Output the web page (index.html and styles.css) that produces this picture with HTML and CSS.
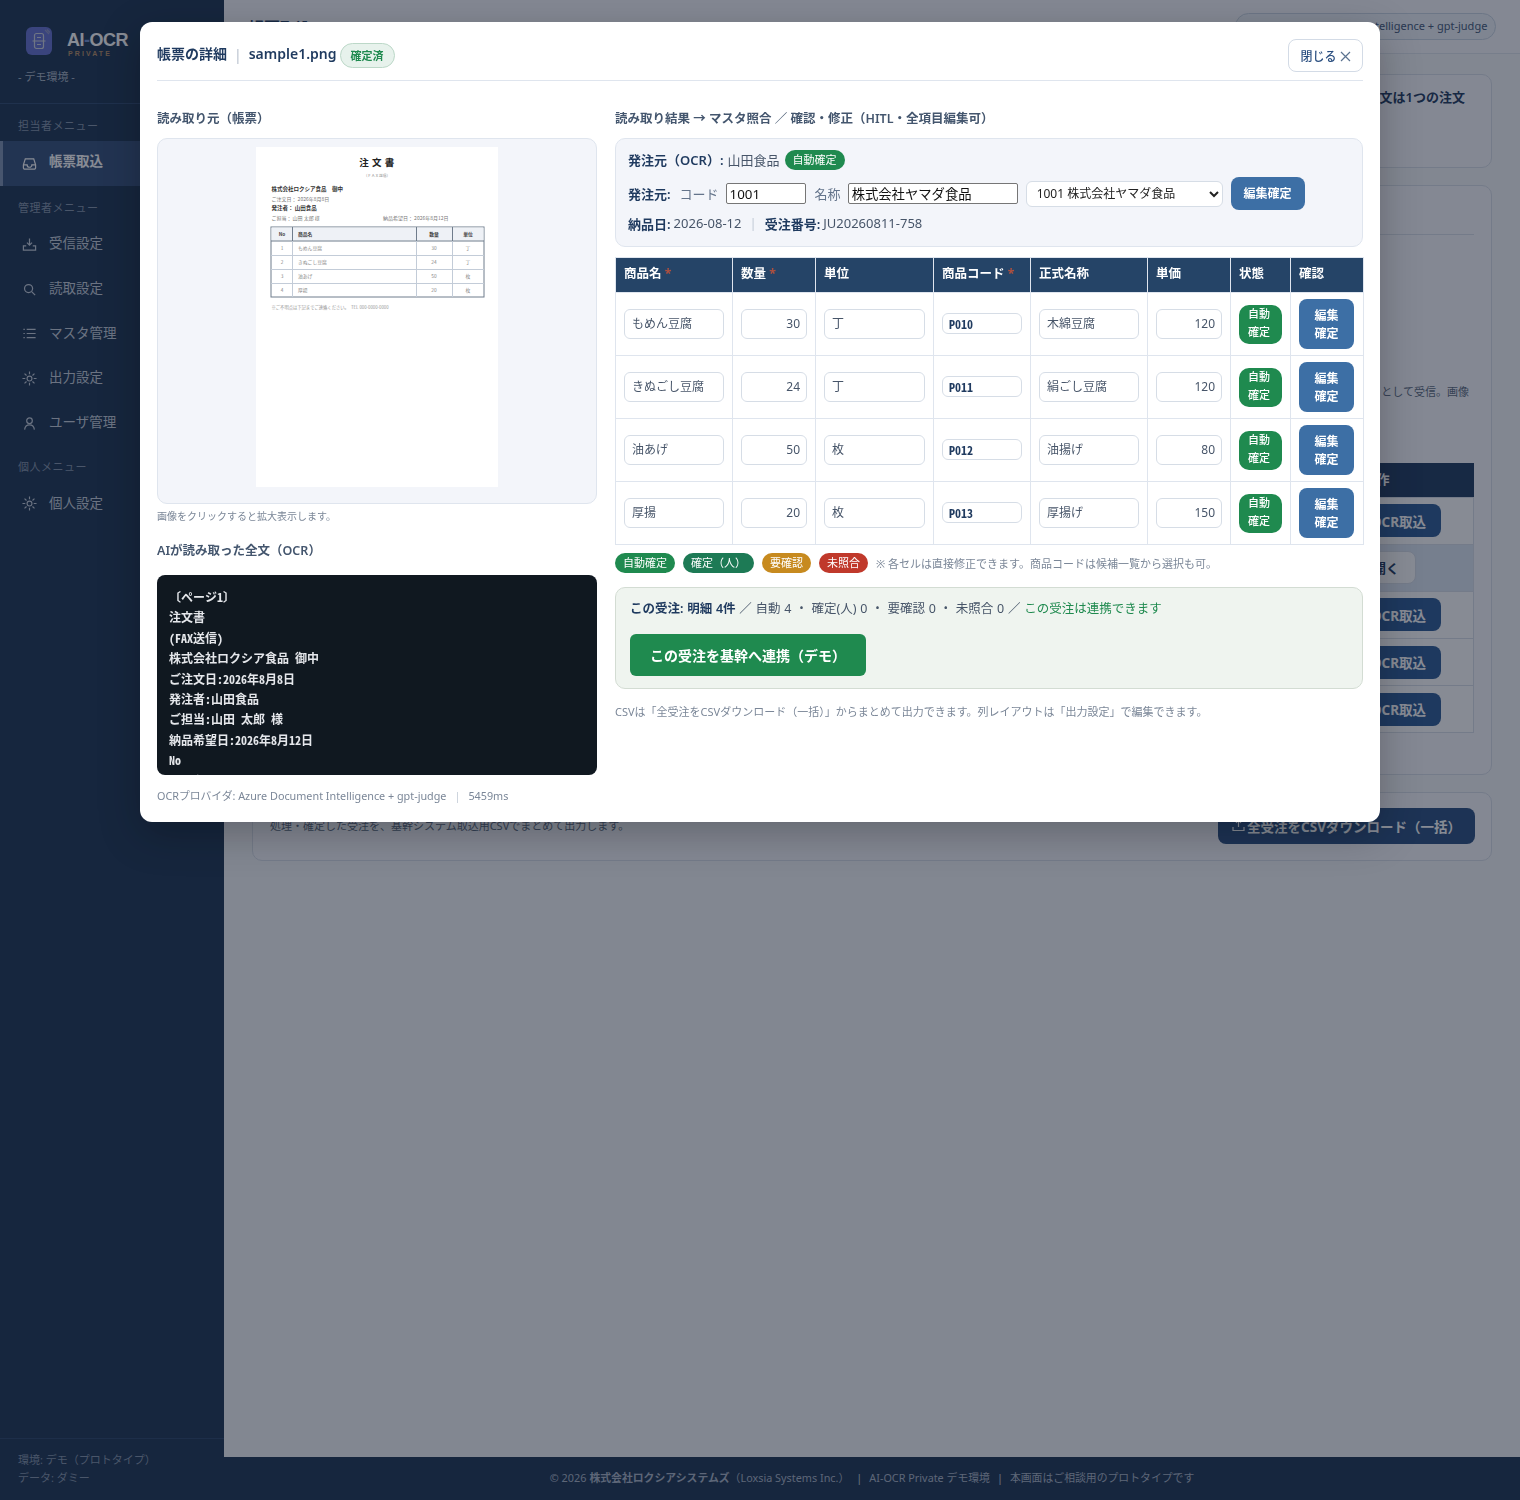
FILE: index.html
```html
<!DOCTYPE html>
<html lang="ja">
<head>
    <meta charset="UTF-8">
    <title>AI-OCR Private</title>
    <link rel="stylesheet" href="styles.css">
</head>
<body>
    <div class="app">
        <aside class="sidebar">
            <div class="brand">
                <div class="brand-row">
                    <div class="brand-icon">
                        <svg width="26" height="28" viewBox="0 0 26 28" fill="none" stroke="#cfd2de" stroke-width="1.2"><rect x="8.500" y="6.500" width="9" height="15" rx="2"/><path d="M6.500 14h13M11 10.500h4M11 17.500h4"/><path d="M19 3l4 4M21 2.500l3 3" stroke="#8f95c4"/></svg>
                    </div>
                    <div class="brand-name">
                        <div class="brand-title">AI<span class="dash">-</span>OCR</div>
                        <div class="brand-sub">PRIVATE</div>
                    </div>
                </div>
                <div class="brand-env">- デモ環境 -</div>
            </div>
            <div class="menu-label first">担当者メニュー</div>
            <a class="menu-item active">
                <svg class="menu-icon" viewBox="0 0 16 16" fill="none" stroke="currentColor" stroke-width="1.300"><path d="M1.500 9.500 3.500 3h9l2 6.500v3a1.500 1.500 0 0 1-1.500 1.500H3a1.500 1.500 0 0 1-1.500-1.500z"/><path d="M1.500 9.500H5.500a2.500 2.500 0 0 0 5 0h4"/></svg>
                <span>帳票取込</span>
            </a>
            <div class="menu-label">管理者メニュー</div>
            <a class="menu-item">
                <svg class="menu-icon" viewBox="0 0 16 16" fill="none" stroke="currentColor" stroke-width="1.300"><path d="M8 1.500v7M5.300 6 8 8.700 10.700 6"/><path d="M4.500 9.500H1.500v4.500h13V9.500h-3"/></svg>
                <span>受信設定</span>
            </a>
            <a class="menu-item">
                <svg class="menu-icon" viewBox="0 0 16 16" fill="none" stroke="currentColor" stroke-width="1.300"><circle cx="7" cy="7" r="4.300"/><path d="m10.300 10.300 3.700 3.700"/></svg>
                <span>読取設定</span>
            </a>
            <a class="menu-item">
                <svg class="menu-icon" viewBox="0 0 16 16" fill="none" stroke="currentColor" stroke-width="1.300"><path d="M5 3.500h9.500M5 8h9.500M5 12.500h9.500M1.500 3.500h1.500M1.500 8h1.500M1.500 12.500h1.500"/></svg>
                <span>マスタ管理</span>
            </a>
            <a class="menu-item">
                <svg class="menu-icon" viewBox="0 0 16 16" fill="none" stroke="currentColor" stroke-width="1.200"><circle cx="8" cy="8" r="2.600"/><path d="M8 .5v3M8 12.500v3M.5 8h3M12.500 8h3M2.700 2.700l2.100 2.100M11.200 11.200l2.100 2.100M13.300 2.700l-2.100 2.100M4.800 11.200l-2.100 2.100"/></svg>
                <span>出力設定</span>
            </a>
            <a class="menu-item">
                <svg class="menu-icon" viewBox="0 0 16 16" fill="none" stroke="currentColor" stroke-width="1.300"><circle cx="8" cy="5" r="3"/><path d="M2.800 14.500c.4-3.400 2.400-5 5.200-5s4.800 1.600 5.200 5"/></svg>
                <span>ユーザ管理</span>
            </a>
            <div class="menu-label">個人メニュー</div>
            <a class="menu-item">
                <svg class="menu-icon" viewBox="0 0 16 16" fill="none" stroke="currentColor" stroke-width="1.200"><circle cx="8" cy="8" r="2.600"/><path d="M8 .5v3M8 12.500v3M.5 8h3M12.500 8h3M2.700 2.700l2.100 2.100M11.200 11.200l2.100 2.100M13.300 2.700l-2.100 2.100M4.800 11.200l-2.100 2.100"/></svg>
                <span>個人設定</span>
            </a>
            <div class="sidebar-foot">
                <div>環境: デモ（プロトタイプ）</div>
                <div>データ: ダミー</div>
            </div>
        </aside>

        <div class="main">
            <header class="topbar">
                <h1>帳票取込</h1>
                <div class="engine-pill">OCR: Azure Document Intelligence + gpt-judge</div>
            </header>
            <div class="content">
                <section class="card card-intro">
                    <p>1通の注文は1つの注文</p>
                </section>
                <section class="card card-list">
                    <div class="card-title">受信一覧</div>
                    <p class="card-lead">として受信。画像</p>
                    <table class="bg-table">
                        <thead><tr><th></th><th>操作</th></tr></thead>
                        <tbody>
                            <tr><td></td><td><button class="btn-ocr">OCR取込</button></td></tr>
                            <tr class="row-open"><td></td><td><button class="btn-open">開く</button></td></tr>
                            <tr><td></td><td><button class="btn-ocr">OCR取込</button></td></tr>
                            <tr><td></td><td><button class="btn-ocr">OCR取込</button></td></tr>
                            <tr><td></td><td><button class="btn-ocr">OCR取込</button></td></tr>
                        </tbody>
                    </table>
                </section>
                <section class="card card-export">
                    <p>処理・確定した受注を、基幹システム取込用CSVでまとめて出力します。</p>
                    <button class="btn-export">
                        <svg width="13" height="13" viewBox="0 0 13 13" fill="none" stroke="currentColor" stroke-width="1.200"><path d="M6.500 8V1.500M4 3.800 6.500 1.300 9 3.800M1 8v3.500h11V8"/></svg>
                        全受注をCSVダウンロード（一括）
                    </button>
                </section>
            </div>
            <footer class="footer">
                © 2026 <b>株式会社ロクシアシステムズ</b>（Loxsia Systems Inc.）<span class="sep">|</span>AI-OCR Private デモ環境<span class="sep">|</span>本画面はご相談用のプロトタイプです
            </footer>
        </div>
    </div>

    <div class="overlay">
        <div class="modal">
            <div class="modal-head">
                <div class="modal-title">
                    <span class="title-text">帳票の詳細</span><span class="title-sep">|</span><span class="title-text">sample1.png</span>
                    <span class="status-pill">確定済</span>
                </div>
                <button class="btn-close">閉じる
                    <svg width="11" height="11" viewBox="0 0 11 11" fill="none" stroke="#5b7390" stroke-width="1.200"><path d="m1 1 9 9M10 1l-9 9"/></svg>
                </button>
            </div>

            <div class="modal-body">
                <div class="col-left">
                    <h3 class="section-title">読み取り元（帳票）</h3>
                    <div class="preview">
                        <svg class="sheet" width="242" height="340" viewBox="0 0 242 340">
                            <rect width="242" height="340" fill="#fff"/>
                            <text x="121" y="19" class="s-title" text-anchor="middle">注 文 書</text>
                            <text x="121" y="30" class="s-small" text-anchor="middle">（ＦＡＸ送信）</text>
                            <text x="15.500" y="44" class="s-bold">株式会社ロクシア食品　御中</text>
                            <text x="15.500" y="54" class="s-gray">ご注文日： 2026年8月8日</text>
                            <text x="15.500" y="63" class="s-bold">発注者： 山田食品</text>
                            <text x="15.500" y="72.500" class="s-gray">ご担当： 山田 太郎 様</text>
                            <text x="127" y="72.500" class="s-gray">納品希望日： 2026年8月12日</text>
                            <rect x="15" y="80" width="213" height="70" fill="#fff" stroke="#6f7c8c" stroke-width="1"/>
                            <rect x="15.500" y="80.500" width="212" height="13" fill="#eef1f6"/>
                            <path d="M15 94h213" stroke="#6f7c8c"/>
                            <path d="M15 108.500h213M15 122.500h213M15 136.500h213M36.500 94v56M160.500 94v56M196.500 94v56" stroke="#c3ccd8"/>
                            <path d="M36.500 80v14M160.500 80v14M196.500 80v14" stroke="#6f7c8c"/>
                            <text x="26" y="89" class="s-th" text-anchor="middle">No</text>
                            <text x="42" y="89" class="s-th">商品名</text>
                            <text x="178" y="89" class="s-th" text-anchor="middle">数量</text>
                            <text x="212" y="89" class="s-th" text-anchor="middle">単位</text>
                            <text x="26" y="103" class="s-td" text-anchor="middle">1</text>
                            <text x="42" y="103" class="s-td">もめん豆腐</text>
                            <text x="178" y="103" class="s-td" text-anchor="middle">30</text>
                            <text x="212" y="103" class="s-td" text-anchor="middle">丁</text>
                            <text x="26" y="117" class="s-td" text-anchor="middle">2</text>
                            <text x="42" y="117" class="s-td">きぬごし豆腐</text>
                            <text x="178" y="117" class="s-td" text-anchor="middle">24</text>
                            <text x="212" y="117" class="s-td" text-anchor="middle">丁</text>
                            <text x="26" y="131" class="s-td" text-anchor="middle">3</text>
                            <text x="42" y="131" class="s-td">油あげ</text>
                            <text x="178" y="131" class="s-td" text-anchor="middle">50</text>
                            <text x="212" y="131" class="s-td" text-anchor="middle">枚</text>
                            <text x="26" y="145" class="s-td" text-anchor="middle">4</text>
                            <text x="42" y="145" class="s-td">厚揚</text>
                            <text x="178" y="145" class="s-td" text-anchor="middle">20</text>
                            <text x="212" y="145" class="s-td" text-anchor="middle">枚</text>
                            <text x="15.500" y="161.500" class="s-foot">※ご不明点は下記までご連絡ください。　TEL 000-0000-0000</text>
                        </svg>
                    </div>
                    <p class="hint">画像をクリックすると拡大表示します。</p>
                    <h3 class="section-title ocr-title">AIが読み取った全文（OCR）</h3>
                    <pre class="ocr-text">〔ページ1〕
注文書
(FAX送信)
株式会社ロクシア食品 御中
ご注文日:2026年8月8日
発注者:山田食品
ご担当:山田 太郎 様
納品希望日:2026年8月12日
No
商品名</pre>
                    <p class="provider">OCRプロバイダ: Azure Document Intelligence + gpt-judge<span class="sep">|</span>5459ms</p>
                </div>

                <div class="col-right">
                    <h3 class="section-title">読み取り結果 → マスタ照合 ／ 確認・修正（HITL・全項目編集可）</h3>
                    <div class="order-panel">
                        <div class="order-line">
                            <b>発注元（OCR）:</b> 山田食品 <span class="badge green">自動確定</span>
                        </div>
                        <div class="order-form">
                            <b>発注元:</b>
                            <span class="field-label">コード</span>
                            <input class="plain-input code" value="1001">
                            <span class="field-label">名称</span>
                            <input class="plain-input name" value="株式会社ヤマダ食品">
                            <select class="order-select"><option>1001 株式会社ヤマダ食品</option></select>
                            <button class="btn-edit wide">編集確定</button>
                        </div>
                        <div class="order-line meta">
                            <b>納品日:</b> 2026-08-12<span class="sep">|</span><b>受注番号:</b> JU20260811-758
                        </div>
                    </div>

                    <table class="items">
                        <thead>
                            <tr>
                                <th>商品名 <i>*</i></th>
                                <th>数量 <i>*</i></th>
                                <th>単位</th>
                                <th>商品コード <i>*</i></th>
                                <th>正式名称</th>
                                <th>単価</th>
                                <th>状態</th>
                                <th>確認</th>
                            </tr>
                        </thead>
                        <tbody>
                            <tr>
                                <td><input class="cell-input" value="もめん豆腐"></td>
                                <td><input class="cell-input num" value="30"></td>
                                <td><input class="cell-input" value="丁"></td>
                                <td><input class="cell-input sku" value="P010"></td>
                                <td><input class="cell-input" value="木綿豆腐"></td>
                                <td><input class="cell-input num" value="120"></td>
                                <td><span class="state">自動<br>確定</span></td>
                                <td><button class="btn-edit">編集<br>確定</button></td>
                            </tr>
                            <tr>
                                <td><input class="cell-input" value="きぬごし豆腐"></td>
                                <td><input class="cell-input num" value="24"></td>
                                <td><input class="cell-input" value="丁"></td>
                                <td><input class="cell-input sku" value="P011"></td>
                                <td><input class="cell-input" value="絹ごし豆腐"></td>
                                <td><input class="cell-input num" value="120"></td>
                                <td><span class="state">自動<br>確定</span></td>
                                <td><button class="btn-edit">編集<br>確定</button></td>
                            </tr>
                            <tr>
                                <td><input class="cell-input" value="油あげ"></td>
                                <td><input class="cell-input num" value="50"></td>
                                <td><input class="cell-input" value="枚"></td>
                                <td><input class="cell-input sku" value="P012"></td>
                                <td><input class="cell-input" value="油揚げ"></td>
                                <td><input class="cell-input num" value="80"></td>
                                <td><span class="state">自動<br>確定</span></td>
                                <td><button class="btn-edit">編集<br>確定</button></td>
                            </tr>
                            <tr>
                                <td><input class="cell-input" value="厚揚"></td>
                                <td><input class="cell-input num" value="20"></td>
                                <td><input class="cell-input" value="枚"></td>
                                <td><input class="cell-input sku" value="P013"></td>
                                <td><input class="cell-input" value="厚揚げ"></td>
                                <td><input class="cell-input num" value="150"></td>
                                <td><span class="state">自動<br>確定</span></td>
                                <td><button class="btn-edit">編集<br>確定</button></td>
                            </tr>
                        </tbody>
                    </table>

                    <div class="legend">
                        <span class="badge green">自動確定</span>
                        <span class="badge teal">確定（人）</span>
                        <span class="badge amber">要確認</span>
                        <span class="badge red">未照合</span>
                        <span class="legend-note">※ 各セルは直接修正できます。商品コードは候補一覧から選択も可。</span>
                    </div>

                    <div class="sync-panel">
                        <div class="sync-line">
                            <b>この受注: 明細 4件</b> ／ 自動 4 ・ 確定(人) 0 ・ 要確認 0 ・ 未照合 0 ／ <span class="ok">この受注は連携できます</span>
                        </div>
                        <button class="btn-sync">この受注を基幹へ連携（デモ）</button>
                    </div>
                    <p class="csv-note">CSVは「全受注をCSVダウンロード（一括）」からまとめて出力できます。列レイアウトは「出力設定」で編集できます。</p>
                </div>
            </div>
        </div>
    </div>
</body>
</html>
```

FILE: styles.css
```css
* {
    box-sizing: border-box;
}

body {
    margin: 0;
    font-family: "Noto Sans", "Noto Sans CJK JP", sans-serif;
    color: #1f3a5f;
    background-color: #f5f6f9;
}

.app {
    display: flex;
    min-height: 1500px;
}

/* sidebar */
.sidebar {
    width: 224px;
    flex-shrink: 0;
    display: flex;
    flex-direction: column;
    background-color: #1d3552;
    color: #d5dbe5;
}

.brand {
    height: 104px;
    padding: 27px 18px 0 26px;
    border-bottom: 1px solid #2f4a70;
}

.brand-row {
    display: flex;
    align-items: flex-start;
    gap: 15px;
}

.brand-icon {
    width: 26px;
    height: 28px;
    border-radius: 6px;
    background-color: #6470d0;
}

.brand-icon svg {
    display: block;
}

.brand-name {
    padding-top: 4px;
}

.brand-title {
    font-family: "Liberation Sans", sans-serif;
    font-size: 18px;
    font-weight: 700;
    line-height: 18px;
    letter-spacing: -0.5px;
    color: #fff;
}

.brand-title .dash {
    color: #6f8fd0;
}

.brand-sub {
    padding-left: 1px;
    font-family: "Liberation Sans", sans-serif;
    font-size: 7px;
    font-weight: 700;
    line-height: 9px;
    letter-spacing: 2.1px;
    color: #b88f66;
}

.brand-env {
    margin: 11px 0 0 -8px;
    font-size: 11px;
    line-height: 16px;
    color: #a9b4c4;
}

.menu-label {
    height: 20px;
    margin-top: 12px;
    margin-bottom: 4px;
    padding-left: 18px;
    font-size: 11px;
    line-height: 20px;
    letter-spacing: 0.5px;
    color: #8494aa;
}

.menu-label.first {
    margin-bottom: 5px;
}

.menu-item {
    display: flex;
    align-items: center;
    gap: 12px;
    height: 44.700px;
    padding-left: 22px;
    font-size: 13.500px;
    line-height: 20px;
    color: #c6cedb;
}

.menu-item span {
    position: relative;
    top: -1px;
}

.menu-item.active {
    height: 45px;
    font-weight: 700;
    color: #fff;
    background-color: #35507a;
    border-left: 3px solid #7f93b3;
    padding-left: 19px;
}

.menu-item.active span {
    top: -3px;
}

.menu-icon {
    width: 15px;
    height: 15px;
    flex-shrink: 0;
}

.sidebar-foot {
    margin-top: auto;
    height: 62px;
    padding: 12px 18px 0;
    border-top: 1px solid #2a4569;
    font-size: 11px;
    line-height: 18px;
    color: #8494aa;
}

/* page behind the dialog */
.main {
    flex: 1;
    min-width: 0;
    display: flex;
    flex-direction: column;
}

.topbar {
    height: 54px;
    display: flex;
    align-items: center;
    justify-content: space-between;
    padding: 0 24px;
    border-bottom: 1px solid #dfe4ec;
    background-color: #f8f9fc;
}

.topbar h1 {
    margin: 0;
    font-size: 16px;
    color: #1f3a5f;
}

.engine-pill {
    width: 261px;
    height: 27px;
    margin-top: -1px;
    padding: 0 11px;
    border: 1px solid #c9d4e2;
    border-radius: 14px;
    background-color: #eef2f8;
    font-size: 11px;
    line-height: 24px;
    text-align: right;
    white-space: nowrap;
    overflow: hidden;
    color: #44597a;
}

.content {
    flex: 1;
    padding: 20px 28px 0;
}

.card {
    border: 1px solid #d9dfe8;
    border-radius: 10px;
    background-color: #f8f9fc;
    margin-bottom: 17px;
}

.card-intro {
    height: 94px;
    padding: 12px 26px;
    text-align: right;
    font-size: 13px;
    font-weight: 600;
}

.card-intro p {
    margin: 0;
}

.card-list {
    height: 590px;
    padding: 0 17px;
}

.card-title {
    height: 49px;
    padding-top: 15px;
    font-size: 14px;
    font-weight: 600;
    border-bottom: 1px solid #d9dfe8;
}

.card-lead {
    margin: 149px 5px 0;
    text-align: right;
    font-size: 11px;
    line-height: 16px;
    color: #5c6b80;
}

.bg-table {
    margin-top: 63px;
    width: 100%;
    border-collapse: collapse;
    background-color: #fff;
}

.bg-table th {
    height: 34px;
    padding: 0 17px 2px;
    text-align: left;
    font-size: 13px;
    color: #fff;
    background-color: #1f3a5f;
}

.bg-table th:first-child {
    width: 1076px;
}

.bg-table td {
    height: 47.200px;
    padding: 0 9px;
    border: 1px solid #d9dfe8;
}

.row-open td {
    background-color: #dde6f3;
}

.btn-ocr {
    width: 85px;
    height: 33px;
    padding: 0;
    border: none;
    border-radius: 8px;
    background-color: #2c5a94;
    color: #fff;
    font-family: inherit;
    font-size: 13.500px;
    font-weight: 700;
    white-space: nowrap;
}

.btn-open {
    width: 60px;
    height: 33px;
    border: 1px solid #d9dfe8;
    border-radius: 8px;
    background-color: #fff;
    color: #1f3a5f;
    font-family: inherit;
    font-size: 13px;
    font-weight: 700;
}

.card-export {
    height: 69px;
    padding: 0 16px 2px 17px;
    display: flex;
    justify-content: space-between;
    align-items: center;
}

.card-export p {
    margin: -2px 0 0;
    font-size: 11px;
    color: #5c6b80;
}

.btn-export {
    width: 257px;
    height: 36px;
    display: flex;
    align-items: center;
    justify-content: center;
    gap: 2px;
    padding: 0;
    border: none;
    border-radius: 8px;
    background-color: #2b4f80;
    color: #fff;
    font-family: inherit;
    font-size: 13.500px;
    font-weight: 700;
    white-space: nowrap;
}

.footer {
    height: 43px;
    padding-bottom: 3px;
    background-color: #1d3552;
    color: #aab5c6;
    font-size: 10.850px;
    display: flex;
    align-items: center;
    justify-content: center;
}

.footer b {
    margin-left: 3px;
}

.footer .sep {
    margin: 0 7px;
}

/* dialog */
.overlay {
    position: fixed;
    inset: 0;
    background-color: rgba(15, 23, 42, 0.5);
}

.modal {
    width: 1240px;
    height: 800px;
    margin: 22px auto 0;
    padding: 17px;
    border-radius: 12px;
    background-color: #fff;
    box-shadow: 0 12px 40px rgba(0, 0, 0, 0.25);
}

.modal-head {
    height: 42px;
    display: flex;
    align-items: flex-start;
    justify-content: space-between;
    border-bottom: 1px solid #dfe5ee;
}

.modal-title {
    display: flex;
    align-items: center;
    height: 30px;
    font-size: 14px;
    font-weight: 600;
}

.title-text {
    position: relative;
    top: -1px;
}

.title-sep {
    margin: 0 7px;
    color: #b6bfcc;
    font-weight: 400;
}

.status-pill {
    margin: 2px 0 0 3px;
    height: 25px;
    padding: 0 10px;
    border: 1px solid #bcd8c8;
    border-radius: 13px;
    background-color: #e7f2ec;
    color: #1f8a4f;
    font-size: 11px;
    line-height: 23px;
}

.btn-close {
    width: 75px;
    height: 33px;
    padding: 1px 0 0;
    border: 1px solid #d3dbe6;
    border-radius: 8px;
    background-color: #fff;
    color: #2b4f80;
    font-family: inherit;
    font-size: 12px;
    font-weight: 500;
    display: flex;
    align-items: center;
    justify-content: center;
    gap: 3px;
}

.modal-body {
    display: grid;
    grid-template-columns: 440px 748px;
    gap: 18px;
    padding-top: 28px;
}

.section-title {
    margin: 0 0 9px;
    font-size: 12.500px;
    font-weight: 600;
    line-height: 20px;
    color: #44566e;
}

.preview {
    height: 366px;
    padding-top: 8px;
    border: 1px solid #dfe5ee;
    border-radius: 10px;
    background-color: #f3f5fa;
    display: flex;
    justify-content: center;
    align-items: flex-start;
}

.sheet text {
    font-family: "Noto Sans CJK JP", sans-serif;
}

.s-title {
    font-size: 9.500px;
    font-weight: 700;
    letter-spacing: 0.5px;
    fill: #222;
}

.s-small {
    font-size: 3.800px;
    fill: #888;
}

.s-bold {
    font-size: 5.500px;
    font-weight: 700;
    fill: #333;
}

.s-gray {
    font-size: 5px;
    fill: #777;
}

.s-th {
    font-size: 4.800px;
    font-weight: 700;
    fill: #444;
}

.s-td {
    font-size: 4.800px;
    fill: #888;
}

.s-foot {
    font-size: 4.300px;
    fill: #999;
}

.hint {
    margin: 5px 0 0;
    font-size: 10px;
    line-height: 14px;
    color: #7b8798;
}

.ocr-title {
    margin: 18px 0 14px;
}

.ocr-text {
    height: 200px;
    margin: 0;
    padding: 12px;
    overflow: hidden;
    border-radius: 8px;
    background-color: #101820;
    color: #e5e7eb;
    font-family: "Noto Sans Mono CJK JP", monospace;
    font-size: 12px;
    font-weight: 700;
    line-height: 20.400px;
}

.provider {
    margin: 14px 0 0;
    font-size: 10.800px;
    line-height: 14px;
    color: #7b8798;
}

.sep {
    margin: 0 8px;
    color: #c4ccd7;
}

.order-panel {
    height: 109px;
    padding: 9px 12px;
    border: 1px solid #dfe5ee;
    border-radius: 10px;
    background-color: #f3f5fa;
}

.order-line {
    display: flex;
    align-items: center;
    gap: 4px;
    height: 22px;
    font-size: 13px;
    color: #475569;
}

.order-line .badge {
    margin: 1px 0 0 1px;
}

.order-line b {
    color: #1f3a5f;
    font-weight: 600;
}

.order-line.meta {
    margin-top: 2px;
    gap: 3px;
}

.order-line.meta .sep {
    margin: 0 5px;
}

.order-form {
    display: flex;
    align-items: center;
    height: 33px;
    margin-top: 7px;
    font-size: 13px;
}

.order-form b {
    font-weight: 600;
    margin-right: 9px;
}

.field-label {
    color: #64748b;
    margin-right: 7px;
}

.plain-input {
    height: 21px;
    padding: 1px 3px;
    border: 1px solid #767676;
    border-radius: 2px;
    font-family: inherit;
    font-size: 13.333px;
    color: #111;
}

.plain-input.code {
    width: 80px;
    margin-right: 9px;
}

.plain-input.name {
    width: 170px;
    margin-right: 8px;
}

.order-select {
    width: 197px;
    height: 26px;
    margin-right: 8px;
    padding: 0 6px;
    border: 1px solid #d6dde6;
    border-radius: 6px;
    background-color: #fff;
    font-family: inherit;
    font-size: 12px;
    color: #222;
}

.btn-edit {
    width: 55px;
    height: 50px;
    padding: 2px 0 0;
    border: none;
    border-radius: 8px;
    background-color: #3d6fa5;
    color: #fff;
    font-family: inherit;
    font-size: 12px;
    font-weight: 700;
    line-height: 18px;
}

.btn-edit.wide {
    width: 74px;
    height: 33px;
    padding: 0;
}

.items {
    width: 748px;
    margin-top: 10px;
    table-layout: fixed;
    border-collapse: collapse;
}

.items th {
    height: 35px;
    padding: 0 8px 2px;
    border: 1px solid #dfe5ee;
    background-color: #254467;
    color: #fff;
    font-size: 12.500px;
    font-weight: 700;
    line-height: 18px;
    text-align: left;
    white-space: nowrap;
}

.items th i {
    color: #b0503f;
    font-style: normal;
}

.items th:nth-child(1) { width: 117px; }
.items th:nth-child(2) { width: 83px; }
.items th:nth-child(3) { width: 118px; }
.items th:nth-child(4) { width: 97px; }
.items th:nth-child(5) { width: 117px; }
.items th:nth-child(6) { width: 83px; }
.items th:nth-child(7) { width: 60px; }
.items th:nth-child(8) { width: 73px; }

.items td {
    height: 63px;
    padding: 0 8px;
    border: 1px solid #dfe5ee;
    vertical-align: middle;
}

.cell-input {
    display: block;
    width: 100%;
    height: 30px;
    padding: 0 6px 2px 7px;
    border: 1px solid #d6dde6;
    border-radius: 6px;
    background-color: #fff;
    font-family: inherit;
    font-size: 12px;
    color: #475569;
}

.cell-input.num {
    text-align: right;
}

.cell-input.sku {
    height: 21px;
    margin-bottom: 1px;
    padding: 0 6px 1px;
    font-family: "Noto Sans Mono CJK JP", monospace;
    font-weight: 700;
    color: #1f3a5f;
}

.state {
    display: flex;
    width: 43px;
    height: 39px;
    padding: 0 3px 2px 0;
    align-items: center;
    justify-content: center;
    text-align: center;
    border-radius: 10px;
    background-color: #1f8a4f;
    color: #fff;
    font-size: 11px;
    font-weight: 500;
    line-height: 18px;
}

.badge {
    display: inline-block;
    height: 20px;
    padding: 0 8px;
    border-radius: 10px;
    color: #fff;
    font-size: 11px;
    line-height: 20px;
    white-space: nowrap;
}

.badge.green { background-color: #1f8a4f; }
.badge.teal { background-color: #1d7a55; }
.badge.amber { background-color: #c78a1f; }
.badge.red { background-color: #c0392b; }

.legend {
    display: flex;
    align-items: center;
    gap: 8px;
    margin-top: 8px;
}

.legend-note {
    font-size: 11px;
    color: #7b8798;
}

.sync-panel {
    height: 102px;
    margin-top: 14px;
    padding: 12px 14px;
    border: 1px solid #d3dcd3;
    border-radius: 10px;
    background-color: #eff4ef;
}

.sync-line {
    font-size: 12.500px;
    line-height: 18px;
    word-spacing: 0.5px;
    color: #475569;
}

.sync-line b {
    color: #1f3a5f;
    font-weight: 600;
}

.sync-line .ok {
    color: #1f8a4f;
}

.btn-sync {
    display: block;
    width: 236px;
    height: 42px;
    margin-top: 16px;
    border: none;
    border-radius: 6px;
    background-color: #1f8a4f;
    color: #fff;
    font-family: inherit;
    font-size: 14px;
    font-weight: 700;
}

.csv-note {
    margin: 16px 0 0;
    font-size: 11px;
    line-height: 14px;
    color: #7b8798;
}
```
